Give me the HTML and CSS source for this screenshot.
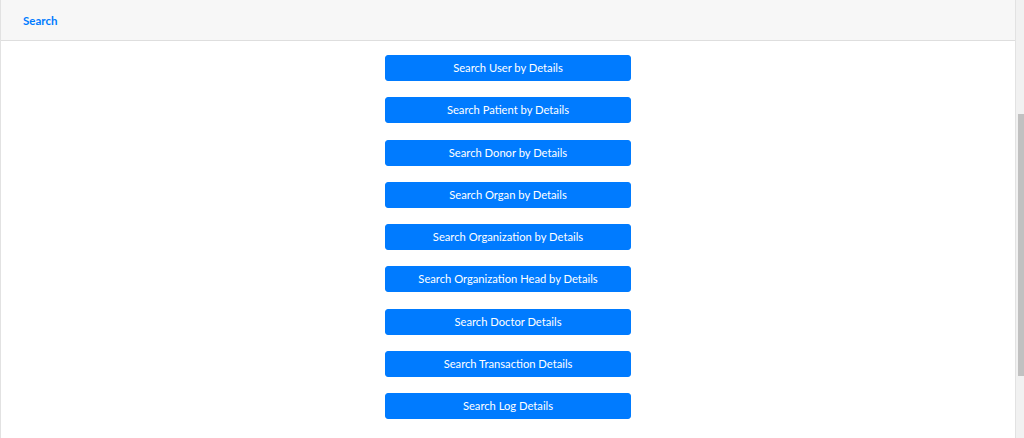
FILE: index.html
```html
<!DOCTYPE html>
<html lang="en">
<head>
<meta charset="utf-8">
<title>Search</title>
<link rel="stylesheet" href="styles.css">
</head>
<body>
<div class="page">
  <div class="card">
    <div class="card-header">
      <a class="header-link" href="#">Search</a>
    </div>
    <div class="card-body">
      <div class="btn-list">
        <button class="btn" type="button">Search User by Details</button>
        <button class="btn" type="button">Search Patient by Details</button>
        <button class="btn" type="button">Search Donor by Details</button>
        <button class="btn" type="button">Search Organ by Details</button>
        <button class="btn" type="button">Search Organization by Details</button>
        <button class="btn" type="button">Search Organization Head by Details</button>
        <button class="btn" type="button">Search Doctor Details</button>
        <button class="btn" type="button">Search Transaction Details</button>
        <button class="btn" type="button">Search Log Details</button>
      </div>
    </div>
  </div>
  <div class="scroll-rail" aria-hidden="true">
    <div class="scroll-thumb"></div>
  </div>
</div>
</body>
</html>
```
FILE: styles.css
```css
html,
body {
  margin: 0;
  height: 100%;
  overflow: hidden;
}
body {
  font-family: "Lato", "Open Sans", Arial, sans-serif;
  background: #fff;
}
.page {
  display: flex;
  height: 100vh;
}
.card {
  flex: 1;
  display: flex;
  flex-direction: column;
  border: 1px solid #e2e2e2;
  border-top: none;
  border-bottom: none;
  background: #fff;
}
.card-header {
  height: 40px;
  flex: none;
  display: flex;
  align-items: center;
  padding-left: 22px;
  background: #f7f7f7;
  border-bottom: 1px solid #dedede;
}
.header-link {
  color: #007bff;
  font-size: 11.5px;
  font-weight: 700;
  text-decoration: none;
}
.card-body {
  padding-top: 14px;
}
.btn-list {
  display: flex;
  flex-direction: column;
  align-items: center;
  row-gap: 16.25px;
}
.btn {
  width: 246px;
  height: 26px;
  padding: 0;
  background: #007bff;
  border: 1px solid #007bff;
  border-radius: 3px;
  color: #fff;
  font-family: "Lato", "Open Sans", Arial, sans-serif;
  font-size: 11.2px;
  line-height: 24px;
  cursor: pointer;
}
.scroll-rail {
  width: 8px;
  flex: none;
  background: #f1f1f1;
  display: flex;
  flex-direction: column;
  align-items: flex-end;
}
.scroll-thumb {
  margin-top: 114px;
  width: 6px;
  height: 262px;
  background: #c1c1c1;
}
```
